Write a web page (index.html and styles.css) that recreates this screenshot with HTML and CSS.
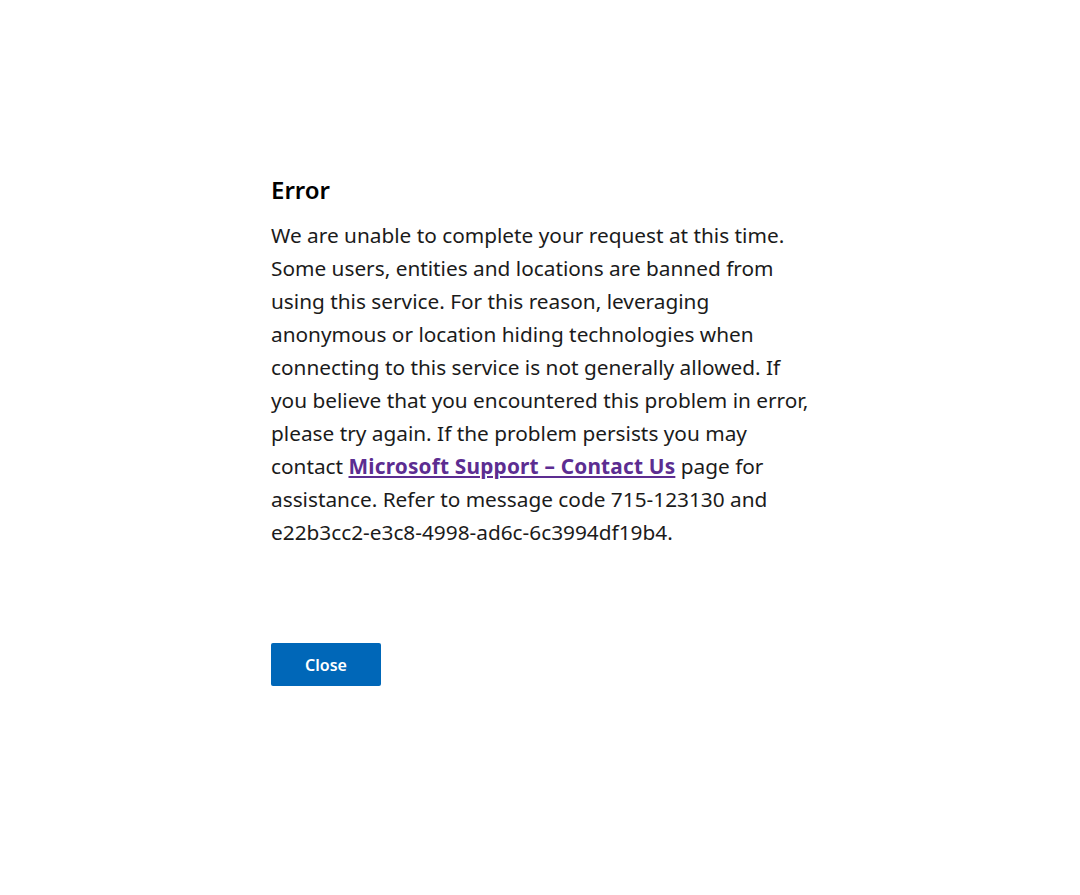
FILE: index.html
```html
<!DOCTYPE html>
<html lang="en">
<head>
<meta charset="utf-8">
<title>Error</title>
<link rel="stylesheet" href="styles.css">
</head>
<body>
<main class="page">
  <section class="dialog">
    <h1 class="title">Error</h1>
    <p class="message">We are unable to complete your request at this time.<br>Some users, entities and locations are banned from<br>using this service. For this reason, leveraging<br>anonymous or location hiding technologies when<br>connecting to this service is not generally allowed. If<br>you believe that you encountered this problem in error,<br>please try again. If the problem persists you may<br>contact <a class="link" href="#">Microsoft Support – Contact Us</a> page for<br>assistance. Refer to message code 715-123130 and<br>e22b3cc2-e3c8-4998-ad6c-6c3994df19b4.</p>
    <div class="actions">
      <button class="btn" type="button">Close</button>
    </div>
  </section>
</main>
</body>
</html>
```

FILE: styles.css
```css
* { box-sizing: border-box; }
html, body { margin: 0; padding: 0; background: #fff; }
body {
  font-family: "Noto Sans", "Open Sans", sans-serif;
  color: #1b1b1b;
}
.page {
  padding: 172px 0 0 271px;
}
.dialog {
  width: 560px;
}
.title {
  margin: 0;
  font-size: 24px;
  font-weight: 600;
  line-height: 36px;
  color: #000;
}
.message {
  margin: 11px 0 0;
  font-size: 20.8px;
  line-height: 33px;
  white-space: nowrap;
}
.link {
  color: #5c2d91;
  font-weight: 700;
  letter-spacing: 0.2px;
  text-decoration: underline;
}
.actions {
  margin-top: 94px;
}
.btn {
  width: 110px;
  height: 43px;
  border: none;
  border-radius: 2px;
  background: #0067b8;
  color: #fff;
  font-family: inherit;
  font-size: 16px;
  font-weight: 600;
  cursor: pointer;
}
```
